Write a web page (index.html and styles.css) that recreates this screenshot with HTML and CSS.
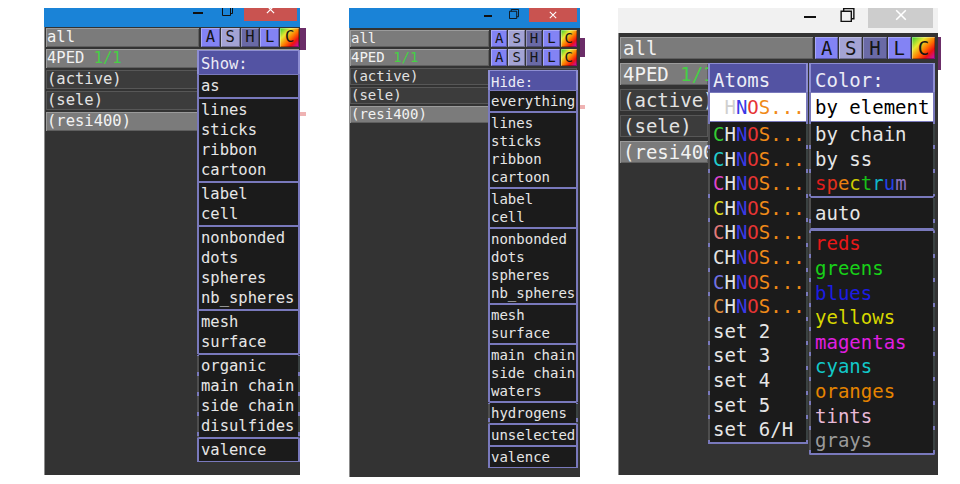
FILE: index.html
```html
<!DOCTYPE html>
<html>
<head>
<meta charset="utf-8">
<link rel="stylesheet" href="styles.css">
</head>
<body>
<div class="page">

  <section class="win w1">
    <header class="tbar">
      <svg class="tb-min" viewBox="0 0 10 2" preserveAspectRatio="none"><rect width="10" height="2"/></svg>
      <svg class="tb-max" viewBox="0 0 11 11"><path d="M0.5 2.5h8v8h-8z M2.5 2.5V0.5h8v8h-2"/></svg>
      <div class="tb-close"><svg viewBox="0 0 10 10"><path d="M1 1L9 9M9 1L1 9"/></svg></div>
    </header>
    <div class="body">
      <div class="obj gray"><span class="nm">all</span><span class="btns"><span class="btn b-a">A</span><span class="btn b-s">S</span><span class="btn b-h">H</span><span class="btn b-l">L</span><span class="btn b-c">C</span></span></div>
      <div class="obj gray"><span class="nm">4PED <span class="grn">1/1</span></span></div>
      <div class="obj dark"><span class="nm">(active)</span></div>
      <div class="obj dark"><span class="nm">(sele)</span></div>
      <div class="obj gray"><span class="nm">(resi400)</span></div>
    </div>
    <div class="menus">
      <div class="menu">
        <div class="mhead">Show:</div>
        <div class="mgrp"><div class="mi">as</div></div>
        <div class="mgrp"><div class="mi">lines</div><div class="mi">sticks</div><div class="mi">ribbon</div><div class="mi">cartoon</div></div>
        <div class="mgrp"><div class="mi">label</div><div class="mi">cell</div></div>
        <div class="mgrp"><div class="mi">nonbonded</div><div class="mi">dots</div><div class="mi">spheres</div><div class="mi">nb_spheres</div></div>
        <div class="mgrp"><div class="mi">mesh</div><div class="mi">surface</div></div>
        <div class="mgrp dim"><div class="mi">organic</div><div class="mi">main chain</div><div class="mi">side chain</div><div class="mi">disulfides</div></div>
        <div class="mgrp"><div class="mi">valence</div></div>
      </div>
    </div>
  </section>
  <div class="edge e1"><i class="ep"></i><i class="ek"></i></div>

  <section class="win w2">
    <header class="tbar">
      <svg class="tb-min" viewBox="0 0 10 2" preserveAspectRatio="none"><rect width="10" height="2"/></svg>
      <svg class="tb-max" viewBox="0 0 11 11"><path d="M0.5 2.5h8v8h-8z M2.5 2.5V0.5h8v8h-2"/></svg>
      <div class="tb-close"><svg viewBox="0 0 10 10"><path d="M1 1L9 9M9 1L1 9"/></svg></div>
    </header>
    <div class="body">
      <div class="obj gray"><span class="nm">all</span><span class="btns"><span class="btn b-a">A</span><span class="btn b-s">S</span><span class="btn b-h">H</span><span class="btn b-l">L</span><span class="btn b-c">C</span></span></div>
      <div class="obj gray"><span class="nm">4PED <span class="grn">1/1</span></span><span class="btns"><span class="btn b-a">A</span><span class="btn b-s">S</span><span class="btn b-h">H</span><span class="btn b-l">L</span><span class="btn b-c">C</span></span></div>
      <div class="obj dark"><span class="nm">(active)</span></div>
      <div class="obj dark"><span class="nm">(sele)</span></div>
      <div class="obj gray"><span class="nm">(resi400)</span></div>
    </div>
    <div class="menus">
      <div class="menu">
        <div class="mhead">Hide:</div>
        <div class="mgrp"><div class="mi">everything</div></div>
        <div class="mgrp"><div class="mi">lines</div><div class="mi">sticks</div><div class="mi">ribbon</div><div class="mi">cartoon</div></div>
        <div class="mgrp"><div class="mi">label</div><div class="mi">cell</div></div>
        <div class="mgrp"><div class="mi">nonbonded</div><div class="mi">dots</div><div class="mi">spheres</div><div class="mi">nb_spheres</div></div>
        <div class="mgrp"><div class="mi">mesh</div><div class="mi">surface</div></div>
        <div class="mgrp"><div class="mi">main chain</div><div class="mi">side chain</div><div class="mi">waters</div></div>
        <div class="mgrp dim"><div class="mi">hydrogens</div></div>
        <div class="mgrp"><div class="mi">unselected</div></div>
        <div class="mgrp"><div class="mi">valence</div></div>
      </div>
    </div>
  </section>
  <div class="edge e2"><i class="ep"></i><i class="ek"></i></div>

  <section class="win w3">
    <header class="tbar">
      <svg class="tb-min" viewBox="0 0 10 2" preserveAspectRatio="none"><rect width="10" height="2"/></svg>
      <svg class="tb-max" viewBox="0 0 11 11"><path d="M0.5 2.5h8v8h-8z M2.5 2.5V0.5h8v8h-2"/></svg>
      <div class="tb-close"><svg viewBox="0 0 10 10"><path d="M1 1L9 9M9 1L1 9"/></svg></div>
    </header>
    <div class="body">
      <div class="obj gray"><span class="nm">all</span><span class="btns"><span class="btn b-a">A</span><span class="btn b-s">S</span><span class="btn b-h">H</span><span class="btn b-l">L</span><span class="btn b-c">C</span></span></div>
      <div class="obj gray cut"><span class="nm">4PED <span class="grn">1/1</span></span></div>
      <div class="obj dark cut"><span class="nm">(active)</span></div>
      <div class="obj dark cut"><span class="nm">(sele)</span></div>
      <div class="obj gray cut"><span class="nm">(resi400)</span></div>
    </div>
    <div class="menus">
      <div class="menu m-atoms">
        <div class="mhead">Atoms</div>
        <div class="mgrp sel"><div class="mi"><span class="cw">C</span><span class="h1">H</span><span class="en">N</span><span class="eo">O</span><span class="es">S...</span></div></div>
        <div class="mgrp dim g-flat g-bot2">
          <div class="mi"><span class="c1">C</span>H<span class="en">N</span><span class="eo">O</span><span class="es">S...</span></div>
          <div class="mi"><span class="c2">C</span>H<span class="en">N</span><span class="eo">O</span><span class="es">S...</span></div>
          <div class="mi"><span class="c3">C</span>H<span class="en">N</span><span class="eo">O</span><span class="es">S...</span></div>
          <div class="mi"><span class="c4">C</span>H<span class="en">N</span><span class="eo">O</span><span class="es">S...</span></div>
          <div class="mi"><span class="c5">C</span>H<span class="en">N</span><span class="eo">O</span><span class="es">S...</span></div>
          <div class="mi"><span class="c6">C</span>H<span class="en">N</span><span class="eo">O</span><span class="es">S...</span></div>
          <div class="mi"><span class="c7">C</span>H<span class="en">N</span><span class="eo">O</span><span class="es">S...</span></div>
          <div class="mi"><span class="c8">C</span>H<span class="en">N</span><span class="eo">O</span><span class="es">S...</span></div>
          <div class="mi">set 2</div>
          <div class="mi">set 3</div>
          <div class="mi">set 4</div>
          <div class="mi">set 5</div>
          <div class="mi">set 6/H</div>
        </div>
      </div>
      <div class="menu m-color">
        <div class="mhead">Color:</div>
        <div class="mgrp sel"><div class="mi">by element</div></div>
        <div class="mgrp dim g-flat g-open">
          <div class="mi">by chain</div>
          <div class="mi">by ss</div>
          <div class="mi"><span class="sp1">s</span><span class="sp2">p</span><span class="sp3">e</span><span class="sp4">c</span><span class="sp5">t</span><span class="sp6">r</span><span class="sp7">u</span><span class="sp8">m</span></div>
        </div>
        <div class="mgrp dim g-thick"><div class="mi">auto</div></div>
        <div class="mgrp dim g-flat g-bot2">
          <div class="mi k-red">reds</div>
          <div class="mi k-grn">greens</div>
          <div class="mi k-blu">blues</div>
          <div class="mi k-yel">yellows</div>
          <div class="mi k-mag">magentas</div>
          <div class="mi k-cya">cyans</div>
          <div class="mi k-ora">oranges</div>
          <div class="mi k-tin">tints</div>
          <div class="mi k-gry">grays</div>
        </div>
      </div>
    </div>
  </section>
  <div class="edge e3"><i class="ep"></i></div>

</div>
</body>
</html>
```

FILE: styles.css
```css
* { box-sizing: border-box; }
html, body { margin: 0; padding: 0; background: #fff; }
body { font-family: "DejaVu Sans Mono", "Liberation Mono", monospace; }

.page {
  display: flex;
  align-items: flex-start;
  padding-top: 8px;
  height: 484px;
  overflow: hidden;
}

/* ---------- windows ---------- */
.win { position: relative; display: flex; flex-direction: column; flex: none; }
.w1 { margin-left: 44px; width: 256px; height: 467px; font-size: 15.5px; --ih: 20px; }
.w2 { margin-left: 43px; width: 231px; height: 469px; font-size: 14px; --ih: 18px; }
.w3 { margin-left: 33px; width: 320px; height: 467px; font-size: 19px; --ih: 24.6px; }

/* ---------- title bars ---------- */
.tbar { flex: none; display: flex; justify-content: flex-end; align-items: flex-start; overflow: hidden; }
.tbar svg { display: block; flex: none; }
.tb-min rect { fill: #111; }
.tb-max path { fill: none; stroke: #111; stroke-width: 1; }
.tb-close { display: flex; justify-content: center; align-items: flex-start; flex: none; overflow: hidden; }
.tb-close path { fill: none; stroke: #fff; stroke-width: 1.3; }

.w1 .tbar, .w2 .tbar { background: #1a83d7; }
.w1 .tbar { height: 19px; }
.w1 .tb-min { width: 10px; height: 2px; margin-top: 4px; margin-right: 19px; }
.w1 .tb-max { width: 11px; height: 11px; margin-top: -3px; margin-right: 11px; }
.w1 .tb-close { width: 53px; height: 13px; margin-right: 3px; background: #c95350; }
.w1 .tb-close svg { width: 9px; height: 9px; margin-top: -3.5px; }

.w2 .tbar { height: 20px; }
.w2 .tb-min { width: 8px; height: 2px; margin-top: 7px; margin-right: 17px; }
.w2 .tb-max { width: 10px; height: 10px; margin-top: 1px; margin-right: 10px; }
.w2 .tb-close { width: 48px; height: 14px; margin-right: 3px; background: #c95350; }
.w2 .tb-close svg { width: 8px; height: 8px; margin-top: 2.5px; }

.w3 .tbar { height: 25px; background: #f1f1f1; }
.w3 .tb-min { width: 12px; height: 2px; margin-top: 8px; margin-right: 24px; }
.w3 .tb-max { width: 15px; height: 14px; margin-top: 0; margin-right: 13px; }
.w3 .tb-max path { stroke-width: 1.1; }
.w3 .tb-close { width: 65px; height: 20px; margin-right: 5px; background: #cdcdcd; }
.w3 .tb-close svg { width: 12px; height: 12px; margin-top: 0.5px; }

/* ---------- body / object list ---------- */
.body {
  flex: 1;
  display: flex;
  flex-direction: column;
  background: #333;
  border-left: 1px solid #8c8c8c;
}
.w1 .body { padding: 1px 1px 0 1px; gap: 2px; }
.w2 .body { padding: 2px 3px 0 0; gap: 2px; }
.w3 .body { padding: 4px 3px 0 1px; gap: 4px; }

.obj { display: flex; gap: 2px; flex: none; }
.w1 .obj { height: 19px; line-height: 19px; }
.w2 .obj { height: 17px; line-height: 17px; }
.w3 .obj { height: 22px; line-height: 22px; }
.w3 .obj.cut { width: 88px; }

.nm { flex: 1; white-space: nowrap; overflow: hidden; padding-left: 1px; }
.w3 .nm { padding-left: 3px; }
.gray .nm { background: #7b7b7b; color: #f2f2f2; box-shadow: inset 1px 1px #9b9b9b, inset -1px -1px #5f5f5f; }
.dark .nm { background: #3c3c3c; color: #e2e2e2; box-shadow: inset 0 0 0 1px #575757; }
.grn { color: #45d045; }

.btns { display: flex; gap: 1px; flex: none; }
.w1 .btns { width: 98px; }
.w2 .btns { width: 86px; }
.w3 .btns { width: 120px; }
.btn {
  flex: 1;
  text-align: center;
  color: #151515;
  box-shadow: inset 1px 1px rgba(255,255,255,.3), inset -1px -1px rgba(0,0,0,.3);
}
.b-a, .b-l { background: #8383f4; }
.b-s { background: #a3a3d4; }
.b-h { background: #6a6aa6; }
.b-c { background: linear-gradient(135deg, #3c3 0%, #e8e830 30%, #f70 55%, #e11 75%, #b1c 100%); }

/* ---------- edges of windows behind ---------- */
.edge { flex: none; display: flex; flex-direction: column; }
.edge i { display: block; }
.ep { background: #6b2d68; }
.ek { background: #efb3b3; }
.e1 { width: 6px; }
.e1 .ep { margin-top: 20px; height: 22px; }
.e1 .ek { margin-top: 62px; height: 4px; }
.e2 { width: 5px; }
.e2 .ep { margin-top: 30px; height: 19px; }
.e2 .ek { margin-top: 48px; height: 4px; }
.e3 { width: 3px; }
.e3 .ep { margin-top: 29px; height: 33px; }

/* ---------- popup menus ---------- */
.menus { position: absolute; display: flex; align-items: flex-start; gap: 1px; }
.w1 .menus { left: 153px; top: 42px; }
.w2 .menus { left: 139px; top: 62px; }
.w3 .menus { left: 90px; top: 55px; }

.w1 .menu { width: 103px; }
.w2 .menu { width: 90px; }
.m-atoms { width: 100px; }
.m-color { width: 126px; }

.mhead {
  background: #5353a3;
  color: #ececf6;
  border: solid #8d8dd2;
  border-width: 1px 2px 0;
  white-space: nowrap;
}
.w1 .mhead { padding: 4px 0 0 2px; line-height: 19px; }
.w2 .mhead { padding: 3px 0 0 1px; line-height: 16px; }
.w3 .mhead { padding: 4px 0 0 3px; line-height: 24px; }
.w3 .m-color .mhead { padding-left: 4px; }

.mgrp {
  background: #1b1b1b;
  color: #e6e6e6;
  border: solid #7979bc;
  border-width: 1px 2px;
  padding: 1px 0;
}
.w3 .mgrp { padding: 1.2px 0; }
.mi { height: var(--ih); line-height: var(--ih); white-space: nowrap; }
.w1 .mi { padding-left: 2px; }
.w2 .mi { padding-left: 1px; }
.m-atoms .mi { padding-left: 3px; }
.m-color .mi { padding-left: 4px; }

.mgrp.sel { background: #fff; color: #000; }
.w3 .mgrp.sel { padding: 2.2px 0 1.2px; }

.mgrp.dim {
  border-left-color: transparent;
  border-right-color: transparent;
  background:
    repeating-linear-gradient(to bottom, #7979bc 0 2px, #4e4e4e 2px calc(var(--ih) - 2px), #7979bc calc(var(--ih) - 2px) var(--ih)) left top / 2px 100% no-repeat border-box,
    repeating-linear-gradient(to bottom, #7979bc 0 2px, #3a4242 2px calc(var(--ih) - 2px), #7979bc calc(var(--ih) - 2px) var(--ih)) right top / 2px 100% no-repeat border-box,
    #1b1b1b;
}
.w3 .g-flat { border-top-width: 0; padding: 0; }
.w3 .g-open { border-bottom-width: 0; }
.w3 .g-bot2 { border-bottom-width: 2px; }
.w3 .g-thick { border-top-width: 2px; border-bottom-width: 3px; padding: 3px 0; }

/* element colours */
.cw { color: #fff; }
.h1 { color: #cfcfcf; }
.en { color: #3a3ae6; }
.eo { color: #e63434; }
.es { color: #f08a18; }
.c1 { color: #33cc33; }
.c2 { color: #22cccc; }
.c3 { color: #dd44cc; }
.c4 { color: #dddd22; }
.c5 { color: #e27a7a; }
.c6 { color: #e2e2e2; }
.c7 { color: #7272e2; }
.c8 { color: #e0903e; }

.sp1 { color: #e01c1c; }
.sp2 { color: #e0301c; }
.sp3 { color: #e88010; }
.sp4 { color: #cccc00; }
.sp5 { color: #18c018; }
.sp6 { color: #10b8c8; }
.sp7 { color: #2442e8; }
.sp8 { color: #8a72c0; }

.k-red { color: #e81818; }
.k-grn { color: #18d018; }
.k-blu { color: #1c1ce4; }
.k-yel { color: #d8d800; }
.k-mag { color: #e01ee0; }
.k-cya { color: #12c8c8; }
.k-ora { color: #e68400; }
.k-tin { color: #e8b8d6; }
.k-gry { color: #9a9a9a; }
```
